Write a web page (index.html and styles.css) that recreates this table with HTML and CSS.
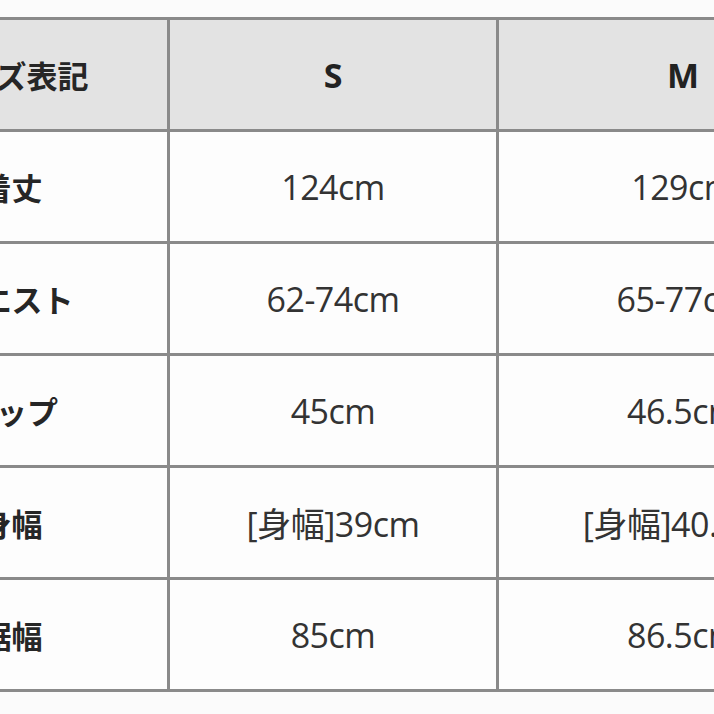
FILE: index.html
```html
<!DOCTYPE html>
<html lang="ja">
<head>
<meta charset="utf-8">
<title>サイズ表</title>
<link rel="stylesheet" href="styles.css">
</head>
<body>
<div class="frame">
  <div class="size-table">
    <div class="cell head label">サイズ表記</div>
    <div class="cell head">S</div>
    <div class="cell head">M</div>

    <div class="cell label">着丈</div>
    <div class="cell value">124cm</div>
    <div class="cell value">129cm</div>

    <div class="cell label">ウエスト</div>
    <div class="cell value">62-74cm</div>
    <div class="cell value">65-77cm</div>

    <div class="cell label">ヒップ</div>
    <div class="cell value">45cm</div>
    <div class="cell value">46.5cm</div>

    <div class="cell label">身幅</div>
    <div class="cell value">[身幅]39cm</div>
    <div class="cell value">[身幅]40.5cm</div>

    <div class="cell label">裾幅</div>
    <div class="cell value">85cm</div>
    <div class="cell value">86.5cm</div>
  </div>
</div>
</body>
</html>
```
FILE: styles.css
```css
html, body {
  margin: 0;
  padding: 0;
  background: #fbfbfb;
  width: 714px;
  height: 714px;
  overflow: hidden;
}

.frame {
  width: 714px;
  height: 714px;
  overflow: hidden;
  padding-top: 17px;
  box-sizing: border-box;
}

.size-table {
  display: grid;
  grid-template-columns: 311px 326px 368px;
  grid-auto-rows: 109px;
  gap: 3px;
  width: max-content;
  margin-left: -144px;
  background: #8a8a8a;
  border-top: 3px solid #8a8a8a;
  border-bottom: 3px solid #8a8a8a;
}

.cell {
  display: flex;
  align-items: center;
  justify-content: center;
  background: #fdfdfd;
  white-space: nowrap;
  overflow: hidden;
}

.head {
  background: #e3e3e3;
  font-family: "Open Sans", "Noto Sans CJK JP", sans-serif;
  font-weight: 700;
  font-size: 34px;
  color: #222;
}

.head.label {
  font-size: 31px;
}

.label {
  font-family: "Noto Sans CJK JP", sans-serif;
  font-weight: 700;
  font-size: 31px;
  color: #262626;
}

.value {
  font-family: "Open Sans", "Noto Sans CJK JP", sans-serif;
  font-weight: 400;
  font-size: 34px;
  color: #333;
  letter-spacing: -0.5px;
}
```
